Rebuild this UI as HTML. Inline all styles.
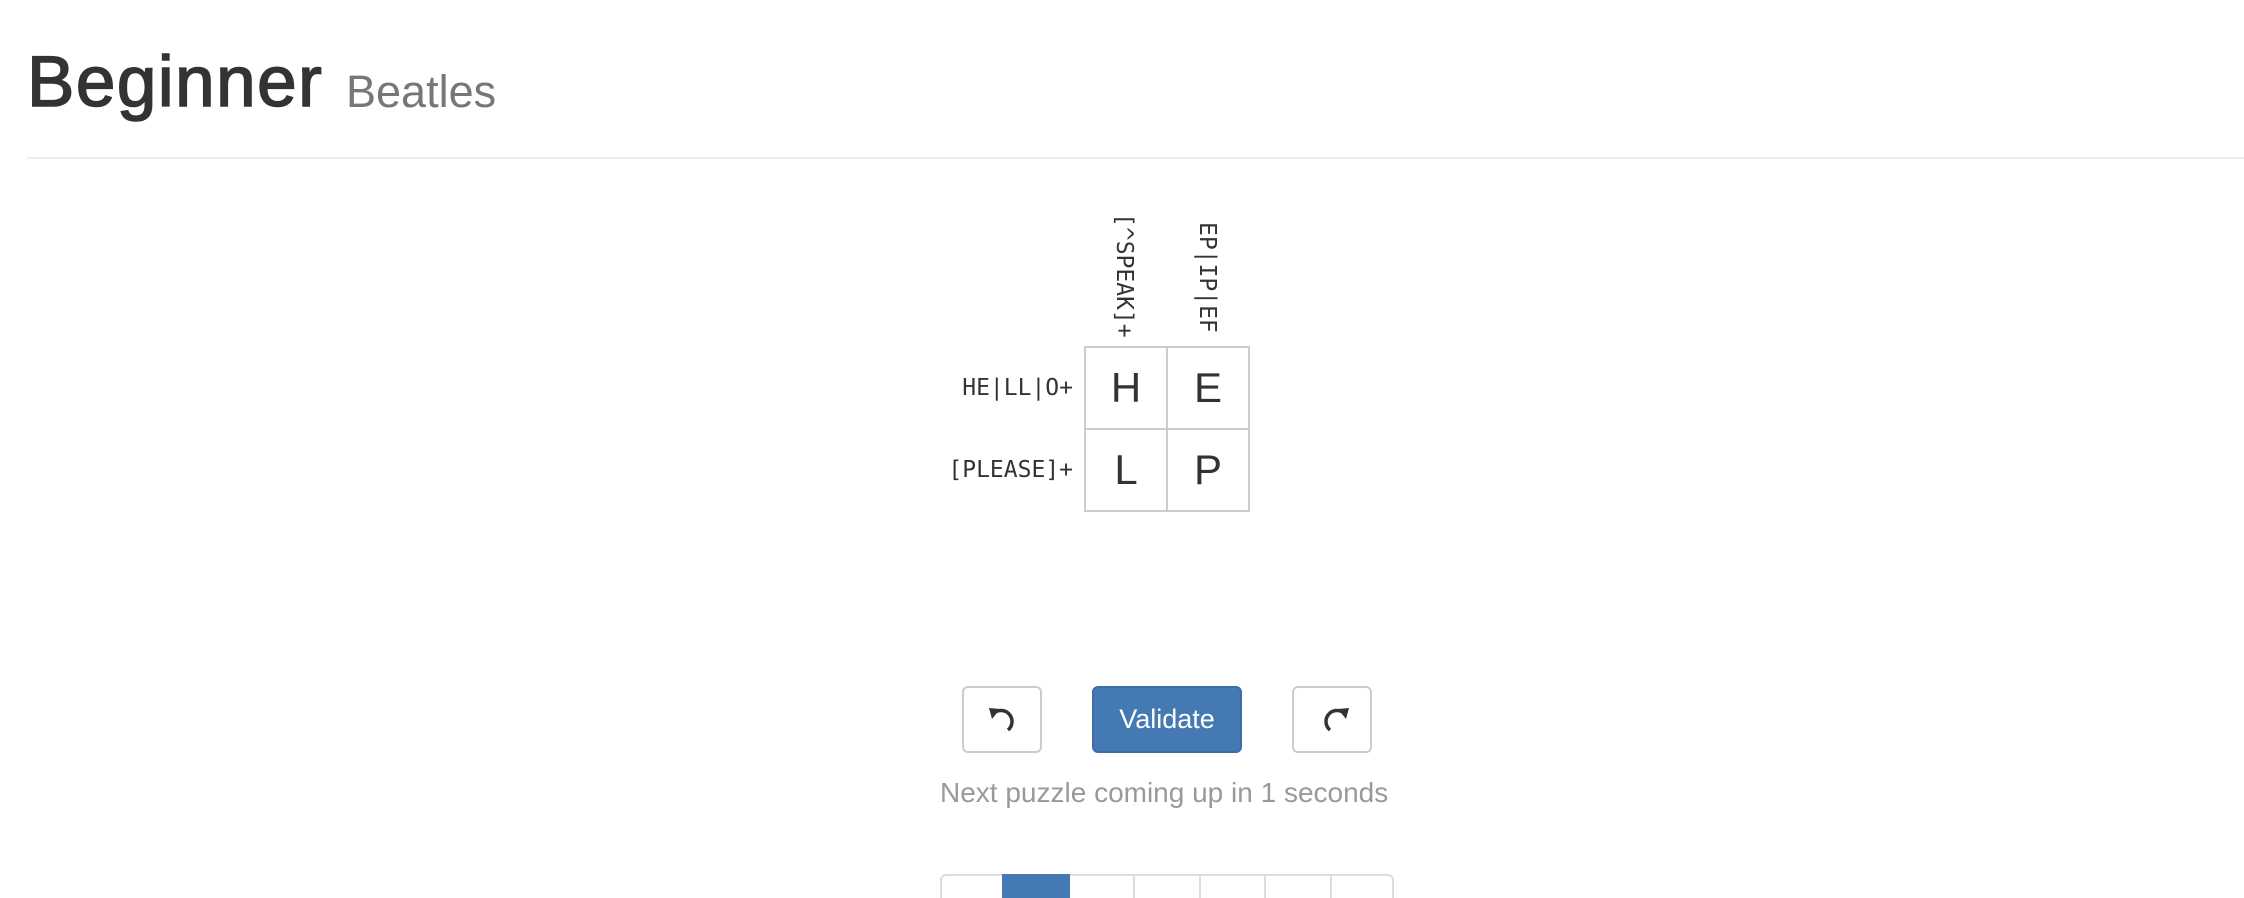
<!DOCTYPE html>
<html><head><style>
html,body{margin:0;width:2244px;height:898px;overflow:hidden;background:#fff;font-family:"Liberation Sans",sans-serif;position:relative}
.a{position:absolute}
.mono{font-family:"DejaVu Sans Mono","Liberation Mono",monospace;font-size:23px;color:#333;white-space:nowrap}
.cell{position:absolute;width:84px;height:84px;box-sizing:border-box;border:2px solid #ccc;font-size:42px;color:#333;text-align:center;line-height:80px}
.btn{position:absolute;top:686px;height:67px;box-sizing:border-box;border:2px solid #ccc;border-radius:6px;background:#fff}
</style></head><body>
<div class="a" style="left:27px;top:38px;font-size:71px;letter-spacing:1.5px;-webkit-text-stroke:1.6px #333;color:#333;line-height:90px;white-space:nowrap">Beginner</div>
<div class="a" style="left:346px;top:62px;font-size:45px;color:#777;line-height:60px;white-space:nowrap">Beatles</div>
<div class="a" style="left:27px;top:157px;right:0;height:2px;background:#eee"></div>

<div class="a mono" style="right:1171px;top:373px;line-height:30px">HE|LL|O+</div>
<div class="a mono" style="right:1171px;top:455px;line-height:30px">[PLEASE]+</div>
<div class="a mono" style="left:1109px;top:213px;writing-mode:vertical-rl;line-height:30px">[^SPEAK]+</div>
<div class="a mono" style="left:1192px;top:222px;writing-mode:vertical-rl;line-height:30px">EP|IP|EF</div>

<div class="cell" style="left:1084px;top:346px">H</div>
<div class="cell" style="left:1166px;top:346px">E</div>
<div class="cell" style="left:1084px;top:428px">L</div>
<div class="cell" style="left:1166px;top:428px">P</div>

<div class="btn" style="left:962px;width:80px">
<svg class="a" style="left:24px;top:18px" width="30" height="30" viewBox="0 0 30 30"><path d="M6 7 A9.5 9.5 0 1 1 20 24" fill="none" stroke="#333" stroke-width="3.5"/><path d="M1 2 L12 3 L4 13 Z" fill="#333"/></svg>
</div>
<div class="btn" style="left:1092px;width:150px;background:#4479b3;border-color:#3e6ea3;color:#fff;font-size:27px;text-align:center;line-height:63px">Validate</div>
<div class="btn" style="left:1292px;width:80px">
<svg class="a" style="left:26px;top:18px" width="30" height="30" viewBox="0 0 30 30"><path d="M24 7 A9.5 9.5 0 1 0 10 24" fill="none" stroke="#333" stroke-width="3.5"/><path d="M29 2 L18 3 L26 13 Z" fill="#333"/></svg>
</div>

<div class="a" style="left:940px;top:777px;font-size:28px;color:#999;white-space:nowrap">Next puzzle coming up in 1 seconds</div>

<div class="a" style="left:940px;top:874px;width:454px;height:40px;box-sizing:border-box;border:2px solid #ddd;border-radius:6px"></div>
<div class="a" style="left:1002px;top:874px;width:68px;height:24px;background:#4479b3"></div>
<div class="a" style="left:1133px;top:874px;width:2px;height:24px;background:#ddd"></div>
<div class="a" style="left:1199px;top:874px;width:2px;height:24px;background:#ddd"></div>
<div class="a" style="left:1264px;top:874px;width:2px;height:24px;background:#ddd"></div>
<div class="a" style="left:1330px;top:874px;width:2px;height:24px;background:#ddd"></div>
</body></html>
